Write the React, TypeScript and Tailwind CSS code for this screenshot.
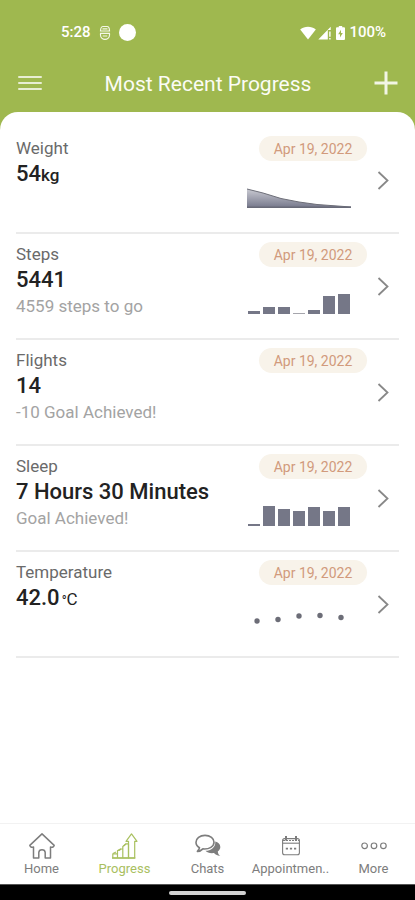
import type { ReactNode } from "react";

function Bars({ heights }: { heights: number[] }) {
  return (
    <svg width="104" height="36" viewBox="0 0 104 36" aria-hidden="true">
      {heights.map((h, i) => (
        <rect key={i} x={1 + i * 15} y={35 - h} width="12" height={h} fill={h === 1 ? "#a6a6ad" : "#757787"} />
      ))}
    </svg>
  );
}

function WeightChart() {
  return (
    <svg width="104" height="36" viewBox="0 0 104 36" aria-hidden="true">
      <defs>
        <linearGradient id="weight-fill" x1="0" y1="0" x2="0" y2="1">
          <stop offset="0" stopColor="#c9cad2" />
          <stop offset="1" stopColor="#74768a" />
        </linearGradient>
      </defs>
      <path d="M0 16 L16 20 L34 25.5 L52 29 L70 31.5 L104 34 V35 H0Z" fill="url(#weight-fill)" />
      <path d="M0 16 L16 20 L34 25.5 L52 29 L70 31.5 L104 34" fill="none" stroke="#6d6e78" />
      <path d="M0 34.3H104" stroke="#686a78" strokeWidth="1.4" />
    </svg>
  );
}

function Dots() {
  const points = [[10, 24], [31, 22.5], [52, 19], [73, 18.5], [94, 20.5]];
  return (
    <svg width="104" height="36" viewBox="0 0 104 36" aria-hidden="true">
      {points.map(([x, y]) => (
        <circle key={x} cx={x} cy={y} r="2.7" fill="#6c6d77" />
      ))}
    </svg>
  );
}

type Metric = { name: string; value: ReactNode; note?: string; chart?: ReactNode };

const metrics: Metric[] = [
  { name: "Weight", value: <>54<span className="text-[17px]">kg</span></>, chart: <WeightChart /> },
  { name: "Steps", value: "5441", note: "4559 steps to go", chart: <Bars heights={[3, 7, 7, 1, 4, 18, 20]} /> },
  { name: "Flights", value: "14", note: "-10 Goal Achieved!" },
  { name: "Sleep", value: "7 Hours 30 Minutes", note: "Goal Achieved!", chart: <Bars heights={[2, 20, 17, 15, 19, 15, 19]} /> },
  {
    name: "Temperature",
    value: <>42.0<span className="ml-0.5 text-[13px]">°</span><span className="text-[17px] font-normal">C</span></>,
    chart: <Dots />,
  },
];

function MetricRow({ name, value, note, chart }: Metric) {
  return (
    <li className="border-b-2 border-[#ebebeb]">
      <a href="#" className="flex h-26 pt-2 pr-2.5">
        <div className="min-w-0 flex-1 whitespace-nowrap">
          <h2 className="text-[17px] leading-6 text-[#6a6a6a]">{name}</h2>
          <p className="text-[22px] leading-7 font-medium text-[#222]">{value}</p>
          {note && <p className="text-[17px] leading-6 text-[#a3a3a3]">{note}</p>}
        </div>
        <div className="flex w-[120px] flex-col items-end">
          <time dateTime="2022-04-19" className="flex h-[25px] w-[108px] items-center justify-center rounded-full bg-[#f8f3ea] text-sm text-[#d19a7c]">
            Apr 19, 2022
          </time>
          <div className="mt-3 mr-4 h-9">{chart}</div>
        </div>
        <svg className="mt-[35px] ml-2.5 h-[19px] w-3" viewBox="0 0 12 19" fill="none" stroke="#888" strokeWidth="1.8" aria-hidden="true">
          <path d="M1.5 1 L10.5 9.5 L1.5 18" />
        </svg>
      </a>
    </li>
  );
}

function HomeIcon() {
  return (
    <svg width="26" height="26" viewBox="0 0 26 26" fill="none" stroke="currentColor" strokeWidth="1.5" strokeLinejoin="round" aria-hidden="true">
      <path d="M13 .9 L.8 12.4 Q1.3 14.8 4.5 14 V25 H9.8 V19.5 Q10 16.8 13 16.8 Q16 16.8 16.2 19.5 V25 H21.5 V14 Q24.7 14.8 25.2 12.4Z" />
    </svg>
  );
}

function ProgressIcon() {
  return (
    <svg width="26" height="26" viewBox="0 0 26 26" fill="none" stroke="currentColor" strokeWidth="1.2" strokeLinejoin="round" aria-hidden="true">
      <path d="M.8 25 V20.8 H5.5 V25Z M5.5 25 V17.5 H7 L9.2 16 H10.8 V25Z M10.8 25 V13.5 L14.3 10.8 H16.5 V25Z" />
      <path d="M16.5 25 V8.3 H14 L19.5 .9 L25 8.3 H22.7 V25Z" />
      <path d="M1 20.5 L4 19 M6 17.2 L9 15.7 M11.5 13 L14 10.8" />
      <path d="M0 25H23.3" strokeWidth="1.5" />
    </svg>
  );
}

function ChatsIcon() {
  return (
    <svg width="26" height="26" viewBox="0 0 26 26" fill="none" aria-hidden="true">
      <path d="M20.2 8.6 C25.2 9.8 27.4 14.6 22.8 18.4 C22.9 20.4 23.9 22 25.3 22.9 C21.9 22.8 19.9 21.2 19.1 20 C15.3 20.5 12 19.6 10.5 17.8 C16.3 17.4 20.9 13.8 20.2 8.6Z" fill="currentColor" />
      <path d="M10 2.4 C4.8 2.4 1 5.4 1 9.2 C1 11.5 2.3 13.5 4.5 14.7 C4.3 16.1 3.5 17.3 2.4 18.4 C5 18.3 6.8 17.1 7.9 15.9 C14.4 16.5 19 13.3 19 9.2 C19 5.4 15.3 2.4 10 2.4Z" stroke="currentColor" strokeWidth="1.6" strokeLinejoin="round" />
    </svg>
  );
}

function CalendarIcon() {
  return (
    <svg width="26" height="26" viewBox="0 0 26 26" fill="none" stroke="currentColor" aria-hidden="true">
      <rect x="4.6" y="5.6" width="16.8" height="16.2" rx="2" strokeWidth="1.1" />
      <path d="M5 10.2H21" strokeWidth="1.1" />
      <path d="M5 7.5H21" strokeWidth="1" strokeDasharray="2 1" />
      <path d="M8 3V7.5 M18 3V7.5" strokeWidth="2" />
      <path d="M7.8 15.7H10 M11.9 15.7H14.1 M16 15.7H18.2" strokeWidth="1.8" />
    </svg>
  );
}

function MoreIcon() {
  return (
    <svg width="26" height="26" viewBox="0 0 26 26" fill="none" stroke="currentColor" strokeWidth="1.2" aria-hidden="true">
      <circle cx="3.6" cy="12.8" r="2.8" />
      <circle cx="13" cy="12.8" r="2.8" />
      <circle cx="22.4" cy="12.8" r="2.8" />
    </svg>
  );
}

const tabs = [
  { label: "Home", icon: <HomeIcon /> },
  { label: "Progress", icon: <ProgressIcon />, active: true },
  { label: "Chats", icon: <ChatsIcon /> },
  { label: "Appointmen..", icon: <CalendarIcon /> },
  { label: "More", icon: <MoreIcon /> },
];

function StatusBar() {
  return (
    <div className="flex h-[17px] items-center justify-between pr-[29px] pl-[61px] text-[15px] font-medium text-white">
      <div className="flex items-center">
        <span>5:28</span>
        <svg className="ml-2" width="12" height="16" viewBox="0 0 12 16" fill="none" stroke="#f4f7e9" strokeWidth="1.2" aria-hidden="true">
          <path d="M1.5 6 C1.5 3 3 1.5 4 1.5 H8 C9 1.5 10.5 3 10.5 6Z M1 8.3 H11 M1.5 8.5 V10 C1.5 13 4 14.4 6 14.4 C8 14.4 10.5 13 10.5 10 V8.5 M3.7 11 H8.3 M3.5 3.8 H8.5" />
        </svg>
        <span className="ml-2 size-[17px] rounded-full bg-white" />
      </div>
      <div className="flex items-center">
        <svg width="16" height="14" viewBox="0 0 16 14" fill="#fff" aria-hidden="true">
          <path d="M.2 3.5 C4.5 -.2 11.5 -.2 15.8 3.5 L8 13.5Z" />
        </svg>
        <svg className="ml-0.5" width="14" height="14" viewBox="0 0 14 14" fill="#fff" aria-hidden="true">
          <path d="M.3 13.5 L12.7 .8 V4 H9.8 V13.5Z" />
          <path d="M11.2 5.5H12.6V10.8H11.2Z M11.2 12H12.6V13.5H11.2Z" />
        </svg>
        <svg className="mr-1 ml-1" width="9" height="14" viewBox="0 0 9 14" aria-hidden="true">
          <path d="M2.8 0H6.2V1.2H8Q9 1.2 9 2.2V13Q9 14 8 14H1Q0 14 0 13V2.2Q0 1.2 1 1.2H2.8Z" fill="#fff" />
          <path d="M5 3.8 L2.2 8.2 H4 V11.5 L6.8 7 H5Z" fill="#9fb84f" />
        </svg>
        <span>100%</span>
      </div>
    </div>
  );
}

export default function App() {
  return (
    <div className="flex min-h-screen flex-col bg-[#9fb84f] font-[Roboto,sans-serif]">
      <header className="h-28 pt-6">
        <StatusBar />
        <div className="mt-[22px] flex items-center justify-between pr-[17px] pl-[18px]">
          <button aria-label="Menu" className="flex h-10 w-6 flex-col justify-center gap-1">
            <span className="h-0.5 w-full rounded-full bg-[#e8eed3]" />
            <span className="h-0.5 w-full rounded-full bg-[#e8eed3]" />
            <span className="h-0.5 w-full rounded-full bg-[#e8eed3]" />
          </button>
          <h1 className="pt-1 text-[21px] text-[#fbfcf5]">Most Recent Progress</h1>
          <button aria-label="Add progress" className="flex h-10 w-6 items-center">
            <svg width="24" height="24" viewBox="0 0 24 24" fill="none" stroke="#f2f5e5" strokeWidth="3" aria-hidden="true">
              <path d="M12 .5V23.5 M.5 12H23.5" />
            </svg>
          </button>
        </div>
      </header>
      <main className="flex-1 rounded-t-[18px] bg-white px-4 pt-4">
        <ul>
          {metrics.map((m) => (
            <MetricRow key={m.name} {...m} />
          ))}
        </ul>
      </main>
      <nav className="grid h-[61px] grid-cols-5 border-t border-[#f2f2f2] bg-white">
        {tabs.map((t) => (
          <a
            key={t.label}
            href="#"
            aria-current={t.active ? "page" : undefined}
            className={`flex flex-col items-center pt-[9px] text-[13px] leading-5 ${t.active ? "text-[#a9c05f]" : "text-[#7d7d7d]"}`}
          >
            {t.icon}
            {t.label}
          </a>
        ))}
      </nav>
      <div className="flex h-4 items-center justify-center border-t border-[#555] bg-black">
        <span className="h-1 w-[77px] rounded-full bg-[#d2d2d2]" />
      </div>
    </div>
  );
}
